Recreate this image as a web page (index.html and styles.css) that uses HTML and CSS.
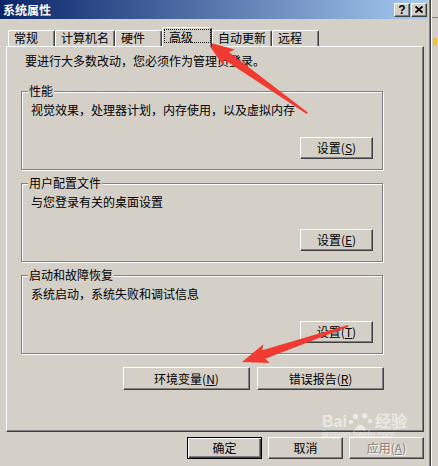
FILE: index.html
```html
<!DOCTYPE html>
<html lang="zh-CN">
<head>
    <meta charset="UTF-8">
    <title>系统属性</title>
    <link rel="stylesheet" href="styles.css">
</head>
<body>
    <div class="screen">
        <div class="window">
            <div class="titlebar">
                <span class="title">系统属性</span>
                <div class="caption-btns">
                    <span class="cbtn">?</span>
                    <span class="cbtn">
                        <svg width="8" height="7" viewBox="0 0 8 7"><path d="M0.5 0.5 L7.5 6.5 M7.5 0.5 L0.5 6.5" stroke="#000" stroke-width="1.8" fill="none"/></svg>
                    </span>
                </div>
            </div>

            <div class="tabs">
                <span class="tab">常规</span>
                <span class="tab">计算机名</span>
                <span class="tab">硬件</span>
                <span class="tab active"><span class="tab-focus">高级</span></span>
                <span class="tab">自动更新</span>
                <span class="tab">远程</span>
            </div>

            <div class="panel">
                <p class="intro">要进行大多数改动，您必须作为管理员登录。</p>

                <fieldset class="group">
                    <legend>性能</legend>
                    <p class="desc">视觉效果，处理器计划，内存使用，以及虚拟内存</p>
                    <div class="row"><button class="btn">设置(<u>S</u>)</button></div>
                </fieldset>

                <fieldset class="group">
                    <legend>用户配置文件</legend>
                    <p class="desc">与您登录有关的桌面设置</p>
                    <div class="row"><button class="btn">设置(<u>E</u>)</button></div>
                </fieldset>

                <fieldset class="group">
                    <legend>启动和故障恢复</legend>
                    <p class="desc">系统启动，系统失败和调试信息</p>
                    <div class="row"><button class="btn">设置(<u>T</u>)</button></div>
                </fieldset>

                <div class="actions">
                    <button class="btn wide">环境变量(<u>N</u>)</button>
                    <button class="btn wide">错误报告(<u>R</u>)</button>
                </div>
            </div>

            <div class="footer">
                <button class="btn dialog default">确定</button>
                <button class="btn dialog">取消</button>
                <button class="btn dialog" disabled>应用(<u>A</u>)</button>
            </div>
        </div>

        <div class="behind">
            <div class="behind-line"></div>
            <div class="behind-icon"></div>
        </div>
    </div>

    <!-- 标注箭头 -->
    <svg class="arrows" width="438" height="466" viewBox="0 0 438 466">
        <path transform="translate(207 42) rotate(35.4)" d="M0 0 L27 -10 L24 -4.5 L123 -1 L123 1 L24 4.5 L27 10 Z" fill="#f03a32"/>
        <path transform="translate(242 362) rotate(-18.8)" d="M0 0 L26 -10 L23 -4.5 L112 -1 L112 1 L23 4.5 L26 10 Z" fill="#f03a32"/>
    </svg>

    <div class="watermark">
        <div class="wm-logo">Bai<svg width="28" height="20" viewBox="0 0 28 22"><circle cx="8" cy="5" r="3"/><circle cx="18" cy="4" r="3"/><circle cx="3" cy="11" r="2.5"/><circle cx="24" cy="10" r="2.5"/><path d="M7 20 Q13 8 20 20 Z"/></svg>经验</div>
        <div class="wm-site">jingyan.baidu.com</div>
    </div>
</body>
</html>
```

FILE: styles.css
```css
body {
    margin: 0;
    width: 438px;
    height: 466px;
    overflow: hidden;
    position: relative;
    font-family: "Noto Sans CJK SC", sans-serif;
    font-size: 12px;
    line-height: 14px;
    color: #000;
    background-color: #d4d0c8;
}

.screen {
    display: flex;
    height: 466px;
}

.window {
    width: 430px;
    border-right: 1px solid #404040;
    box-shadow: inset -1px 0 0 #808080;
}

/* barre de titre */
.titlebar {
    display: flex;
    align-items: center;
    height: 19px;
    margin-right: 2px;
    padding: 0 1px 0 3px;
    background: linear-gradient(90deg, #0a246a, #a6caf0);
}

.title {
    flex: 1;
    color: #fff;
    font-weight: bold;
}

.caption-btns {
    display: flex;
    gap: 1px;
}

.cbtn {
    box-sizing: border-box;
    display: flex;
    align-items: center;
    justify-content: center;
    width: 16px;
    height: 14px;
    background-color: #d4d0c8;
    border: 1px solid;
    border-color: #fff #404040 #404040 #fff;
    box-shadow: inset -1px -1px 0 #808080;
    font-family: "Liberation Sans", sans-serif;
    font-weight: bold;
    font-size: 12px;
    line-height: 12px;
}

/* onglets */
.tabs {
    display: flex;
    align-items: flex-end;
    height: 19px;
    margin: 8px 0 0 8px;
}

.tab {
    box-sizing: border-box;
    height: 16px;
    min-width: 47px;
    padding: 0 5px;
    border: 1px solid #fff;
    border-bottom: 0;
    border-right-color: #404040;
    border-radius: 2px 2px 0 0;
    box-shadow: inset -1px 0 0 #808080;
    line-height: 14px;
}

.tab.active {
    position: relative;
    z-index: 1;
    display: flex;
    height: 20px;
    min-width: 50px;
    margin-bottom: -1px;
    padding: 1px 0 4px 1px;
    background-color: #d4d0c8;
}

.tab-focus {
    flex: 1;
    padding: 0 4px;
    border: 1px dotted #000;
    line-height: 13px;
}

/* panneau */
.panel {
    box-sizing: border-box;
    width: 418px;
    height: 386px;
    margin-left: 6px;
    padding: 7px 0 0 14px;
    border: 1px solid #fff;
    border-right-color: #404040;
    border-bottom-color: #404040;
    box-shadow: inset -1px -1px 0 #808080;
}

.intro {
    margin: 0 0 16px 4px;
}

.group {
    box-sizing: border-box;
    width: 362px;
    min-width: 0;
    margin: 0 0 6px;
    padding: 0 9px 10px;
    border: 1px solid #808080;
    box-shadow: inset 1px 1px 0 #fff, 1px 1px 0 #fff;
}

.group legend {
    margin-left: -3px;
    padding: 0 1px;
    background-color: #d4d0c8;
}

.desc {
    margin: 5px 0 0;
}

.row {
    display: flex;
    justify-content: flex-end;
    margin-top: 20px;
}

.actions {
    display: flex;
    justify-content: flex-end;
    gap: 7px;
    width: 363px;
    margin-top: 13px;
}

/* boutons */
.btn {
    box-sizing: border-box;
    width: 73px;
    height: 22px;
    padding: 0;
    font: inherit;
    color: #000;
    background-color: #d4d0c8;
    border: 1px solid;
    border-color: #fff #404040 #404040 #fff;
    border-radius: 0;
    box-shadow: inset -1px -1px 0 #808080;
}

.btn.wide {
    width: 127px;
    height: 23px;
}

.btn.dialog {
    width: 75px;
}

.btn.default {
    border-color: #000;
    box-shadow: inset 1px 1px 0 #fff, inset -1px -1px 0 #404040, inset -2px -2px 0 #808080;
}

.btn:disabled {
    color: #808080;
    text-shadow: 1px 1px 0 #fff;
}

.footer {
    display: flex;
    justify-content: flex-end;
    gap: 6px;
    width: 418px;
    margin: 5px 0 0 6px;
}

/* fenêtre derrière */
.behind {
    flex: 1;
    border-left: 1px solid #fff;
}

.behind-line {
    height: 1px;
    margin-top: 17px;
    background-color: #808080;
}

.behind-icon {
    width: 4px;
    height: 8px;
    margin: 20px 0 0 1px;
    background-color: #f0c040;
}

/* annotations */
.arrows {
    position: absolute;
    top: 0;
    left: 0;
    pointer-events: none;
}

.watermark {
    position: absolute;
    top: 414px;
    left: 322px;
    color: rgba(255, 255, 255, 0.55);
    pointer-events: none;
}

.wm-logo {
    display: flex;
    align-items: center;
    height: 16px;
    font-family: "Liberation Sans", sans-serif;
    font-weight: bold;
    font-size: 16px;
    line-height: 16px;
}

.wm-logo svg {
    fill: rgba(255, 255, 255, 0.55);
}

.wm-site {
    font-family: "Liberation Sans", sans-serif;
    font-size: 9px;
    line-height: 9px;
}
```
